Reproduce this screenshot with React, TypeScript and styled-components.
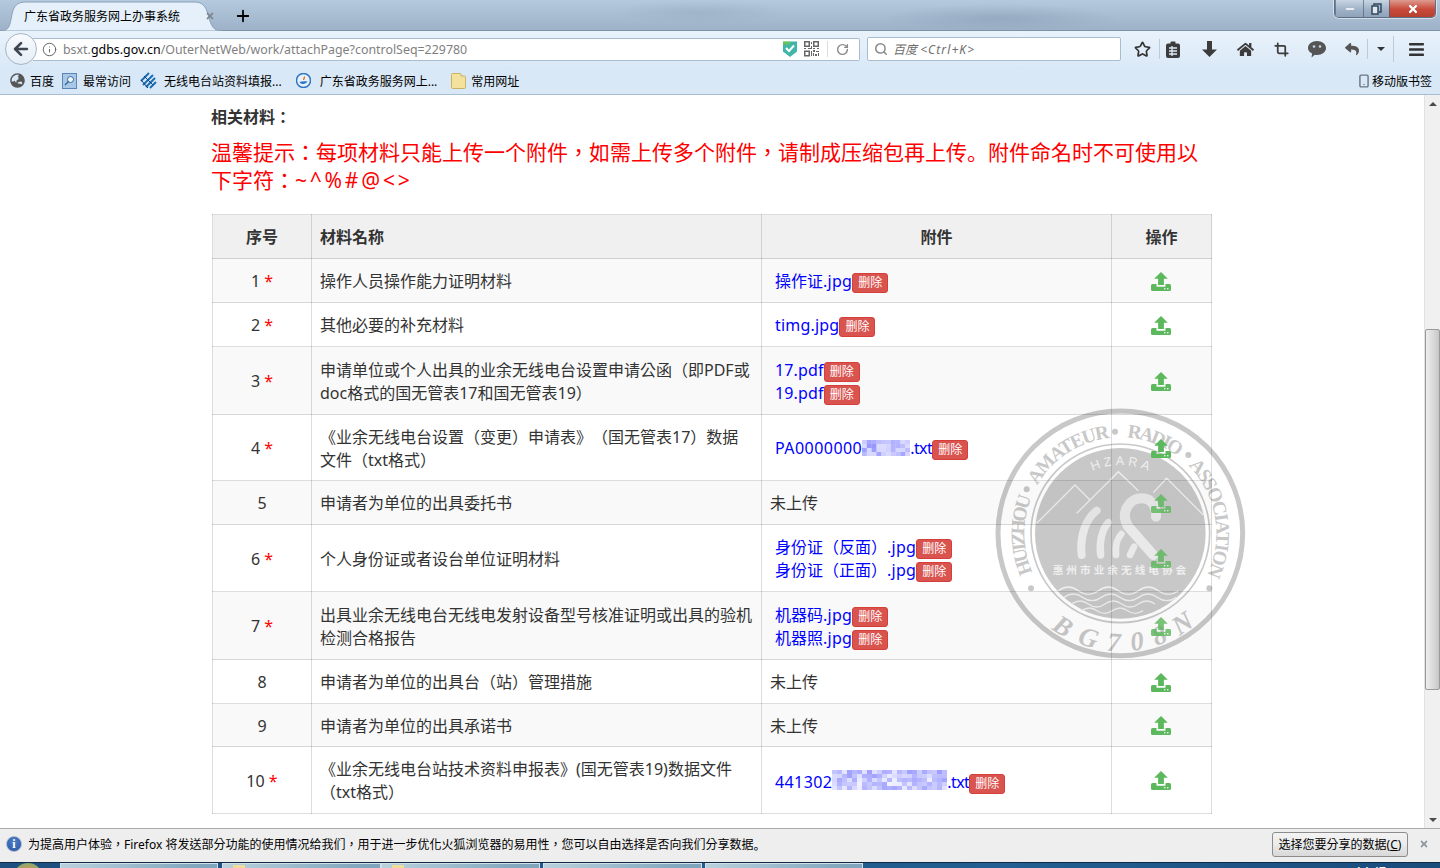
import React from "react";
import styled, { createGlobalStyle } from "styled-components";
import { FaHome, FaReply, FaBars, FaGlobeAsia, FaTimes } from "react-icons/fa";
import { Star, Crop, RotateCw, Search, ArrowLeft, Plus, Info, Smartphone, Minus } from "lucide-react";

const UI = `"Noto Sans", "Noto Sans CJK TC", sans-serif`;

const Global = createGlobalStyle`
  html, body { margin: 0; padding: 0; height: 100%; overflow: hidden; background: #fff; }
  body { font-family: ${UI}; color: #333; text-spacing-trim: space-all; }
  * { box-sizing: border-box; }
`;

const Shell = styled.div`
  width: 1440px; height: 868px; display: flex; flex-direction: column; overflow: hidden;
`;
const TitleBar = styled.div`
  height: 31px; flex: none; display: flex; align-items: flex-start; position: relative;
  background:
    radial-gradient(ellipse 120px 14px at 1000px 18px, rgba(120,140,165,.35), transparent),
    radial-gradient(ellipse 90px 12px at 700px 12px, rgba(120,140,165,.22), transparent),
    linear-gradient(#b5c9de, #9db1c8);
  border-bottom: 1px solid #7f93a8;
`;
const Tab = styled.div`
  position: relative; width: 222px; height: 31px; flex: none;
  display: flex; align-items: center; padding: 0 7px 0 24px; font-size: 12px; color: #000;
`;
const TabShape = styled.svg`
  position: absolute; left: 0; top: 0; width: 222px; height: 31px; z-index: 0;
`;
const TabTitle = styled.span`position: relative; flex: 1; white-space: nowrap;`;
const TabClose = styled.span`position: relative; color: #7f8891; display: flex;`;
const NewTab = styled.span`display: flex; margin: 7px 0 0 12px; color: #000;`;
const WinControls = styled.div`
  margin-left: auto; margin-right: 4px; display: flex; height: 18px; border: 1px solid #5d6f84; border-top: 0;
  border-radius: 0 0 5px 5px; overflow: hidden; box-shadow: 0 0 0 1px rgba(255,255,255,.5);
`;
const WinBtn = styled.div<{ $w: number; $close?: boolean }>`
  width: ${p => p.$w}px; display: flex; align-items: center; justify-content: center; color: #fff;
  border-left: 1px solid rgba(70,90,110,.6);
  background: ${p => p.$close ? "linear-gradient(#dd9a8f, #c9493a 55%, #b5402f)" : "linear-gradient(#c9d6e4, #9fb2c7 55%, #8ea3b9)"};
`;
const Toolbar = styled.div`
  height: 36px; flex: none; display: flex; align-items: center; padding-left: 5px;
  background: linear-gradient(#e8f2fb, #dbe9f7);
`;
const BackBtn = styled.div`
  width: 32px; height: 32px; border-radius: 50%; flex: none; position: relative; z-index: 1;
  display: flex; align-items: center; justify-content: center; color: #3e4650;
  background: linear-gradient(#f8fbfe, #e4edf6); border: 1px solid #a7b6c6;
`;
const UrlBar = styled.div`
  width: 827px; height: 23px; margin-left: -4px; flex: none; display: flex; align-items: center;
  background: #fff; border: 1px solid #a9bdd1; border-left: 0; border-radius: 0 2px 2px 0;
  padding-left: 9px; font-size: 12.4px; color: #7f7f7f; white-space: nowrap;
`;
const UrlInfo = styled.span`display: flex; color: #666; margin-right: 6px;`;
const UrlHost = styled.span`color: #000;`;
const UrlRight = styled.span`margin-left: auto; display: flex; align-items: center; padding-right: 10px;`;
const ShieldWrap = styled.span`display: flex; margin-right: 6px;`;
const UrlDivider = styled.span`width: 1px; height: 16px; background: #dcdcdc; margin: 0 8px;`;
const SearchBox = styled.div`
  width: 254px; height: 24px; margin-left: 7px; flex: none; display: flex; align-items: center; gap: 5px;
  background: #fff; border: 1px solid #a9bdd1; border-radius: 2px; padding-left: 6px;
  font-size: 12px; font-style: italic; color: #6d6d6d;
`;
const Tools = styled.div`display: flex; align-items: center; margin-left: 3px;`;
const ToolBtn = styled.div<{ $w?: number; $ml?: number }>`
  width: ${p => p.$w ?? 36}px; height: 24px; flex: none; display: flex; align-items: center; justify-content: center;
  color: #3c3c3c; margin-left: ${p => p.$ml ?? 0}px;
`;
const ToolSep = styled.span<{ $h?: number }>`
  width: 1px; height: ${p => p.$h ?? 20}px; background: #bccbdb; flex: none; margin-left: -1px;
`;
const Caret = styled.span`
  width: 0; height: 0; border-left: 4px solid transparent; border-right: 4px solid transparent; border-top: 4px solid #333;
`;
const Bookmarks = styled.div`
  height: 28px; flex: none; display: flex; align-items: center; padding: 0 8px 0 10px; font-size: 12px; color: #000;
  background: #d9e8f7; border-bottom: 1px solid #a9bdd1;
`;
const Bookmark = styled.span<{ $gap: number; $after: number }>`
  display: flex; align-items: center; gap: ${p => p.$gap}px; margin-right: ${p => p.$after}px; white-space: nowrap;
`;
const MobileMark = styled.span`margin-left: auto; display: flex; align-items: center; gap: 1px; color: #000; white-space: nowrap;`;
const Body = styled.div`flex: none; height: 733px; display: flex;`;
const Page = styled.div`flex: 1; position: relative; overflow: hidden; background: #fff; padding-right: 2px;`;
const Container = styled.div`
  width: 1000px; margin: 0 auto; padding-top: 11px; position: relative; z-index: 1;
`;
const Section = styled.div`font-size: 16px; font-weight: 700; line-height: 23px; color: #333;`;
const Warning = styled.div`
  font-size: 21px; line-height: 28px; color: #f00; margin: 8px 0 20px;
`;
const Period = styled.span`font-family: "Noto Sans CJK SC", sans-serif;`;
const Table = styled.table`
  width: 999px; margin-left: 1px; table-layout: fixed; border-collapse: collapse; font-size: 16px; line-height: 23px; color: #333;
`;
const Head = styled.th<{ $left?: boolean }>`
  height: 44px; padding: 2px 8px 0; background: rgba(0,0,0,.06); font-weight: 700;
  border: 1px solid rgba(0,0,0,.135); text-align: ${p => p.$left ? "left" : "center"};
`;
const Row = styled.tr<{ $odd: boolean; $h: number }>`
  height: ${p => p.$h}px; background: ${p => p.$odd ? "rgba(0,0,0,.024)" : "transparent"};
`;
const Cell = styled.td<{ $center?: boolean }>`
  padding: 2px 8px 0; border: 1px solid rgba(0,0,0,.135); text-align: ${p => p.$center ? "center" : "left"};
  vertical-align: middle;
`;
const Star_ = styled.span`color: #f00;`;
const FileList = styled.div`padding-left: 5px;`;
const Empty = styled.span`color: #333;`;
const FileLine = styled.div`white-space: nowrap; height: 23px;`;
const FileLink = styled.a`color: #00f; text-decoration: none;`;
const Lat = styled.span<{ $ls: number }>`letter-spacing: ${p => p.$ls}px;`;
const Del = styled.span`
  display: inline-block; height: 20px; line-height: 18px; padding: 0 5px; font-size: 12px; color: #fff;
  background: #d9534f; border: 1px solid #d43f3a; border-radius: 3px; vertical-align: 0;
`;
const UploadSvg = styled.svg<{ $dim?: boolean }>`
  width: 20px; height: 19px; display: block; margin: -1px 0 0 31px; opacity: ${p => p.$dim ? .82 : 1};
`;
const Blur = styled.svg`display: inline-block; vertical-align: -2px;`;
const WatermarkSvg = styled.svg`
  position: absolute; left: 980px; top: 305px; width: 280px; height: 270px; z-index: 0;
`;
const Scrollbar = styled.div`
  width: 16px; flex: none; background: #f0f0f0; border-left: 1px solid #e2e2e2; display: flex; flex-direction: column; align-items: center;
`;
const ArrowUp = styled.span`
  width: 0; height: 0; border-left: 4px solid transparent; border-right: 4px solid transparent;
  border-bottom: 4px solid #4b4b4b; margin-top: 7px;
`;
const ArrowDn = styled.span`
  width: 0; height: 0; border-left: 4px solid transparent; border-right: 4px solid transparent;
  border-top: 4px solid #4b4b4b; margin-top: auto; margin-bottom: 6px;
`;
const Thumb = styled.div`
  width: 15px; height: 361px; margin-top: 223px; background: linear-gradient(90deg, #eee, #d8d8d8 60%, #c6c6c6);
  border: 1px solid #999; border-radius: 2px;
`;
const Notice = styled.div`
  height: 34px; flex: none; display: flex; align-items: center; padding: 0 0 3px 6px; font-size: 12px; color: #000;
  background: #eeeeee; border-top: 1px solid #aaa;
`;
const NoticeIcon = styled.span`
  width: 16px; height: 16px; border-radius: 50%; background: radial-gradient(circle at 50% 35%, #4f7fc8, #2654a3);
  border: 1px solid #a8b6cc; color: #fff; font: bold 12px/14px "Liberation Serif", serif; text-align: center; margin-right: 6px; flex: none;
`;
const NoticeBtn = styled.button`
  margin-left: auto; width: 136px; height: 25px; padding: 0; font: 12px ${UI}; color: #000;
  background: linear-gradient(#f3f3f3, #ebebeb 50%, #d8d8d8); border: 1px solid #8c8c8c; border-radius: 3px;
`;
const NoticeClose = styled.span`display: flex; color: #8f979f; width: 32px; justify-content: center;`;
const Taskbar = styled.div`
  height: 6px; flex: none; display: flex; overflow: hidden;
  background: linear-gradient(90deg, #1d4f80, #235f92 70%, #1a4c7c); border-top: 1px solid #0f2a44;
`;
const Orb = styled.span`
  width: 30px; height: 30px; border-radius: 50%; margin: 0 17px 0 13px; flex: none;
  background: radial-gradient(circle, #e8935c 30%, #8aa96a 70%);
`;
const TaskBtn = styled.span<{ $w: number; $mr?: number }>`
  width: ${p => p.$w}px; flex: none; margin-right: ${p => p.$mr ?? 3}px; padding-left: 10px;
  background: linear-gradient(90deg, #b9d1dd, #7fa6bd 90%); border: 1px solid #d3e0ea; border-bottom: 0;
`;
const Folder = styled.span`
  display: block; margin-top: 1px; width: 12px; height: 6px; background: #f0dd9a;
`;
const Clock = styled.span`
  margin-left: auto; margin-right: 54px; color: #fff; font-size: 12px; line-height: 16px; margin-top: 1px;
`;

function Mosaic({ w, h, seed, strong, cell }: { w: number; h: number; seed: number; strong: boolean; cell: number }) {
  const cells: React.ReactElement[] = [];
  let s = seed;
  for (let y = 0; y < h; y++) {
    for (let x = 0; x < w; x++) {
      s = (s * 137 + 59) % 1009;
      const v = s / 1009;
      const a = strong ? 0.08 + v * 0.5 : 0.22 + v * v * 0.42;
      cells.push(<rect key={`${x}-${y}`} x={x * cell} y={y * 4} width={cell} height={4} fill="#5a5aff" fillOpacity={a} />);
    }
  }
  return <Blur width={w * cell} height={h * 4} viewBox={`0 0 ${w * cell} ${h * 4}`}>{cells}</Blur>;
}

const Jpg = () => <Lat $ls={0.25}>.jpg</Lat>;

const sheet = [
  { n: "1", req: true, h: 44, name: "操作人员操作能力证明材料", files: [<>操作证<Jpg /></>] },
  { n: "2", req: true, h: 44, name: "其他必要的补充材料", files: [<Lat $ls={0.2}>timg.jpg</Lat>] },
  { n: "3", req: true, h: 68, name: "申请单位或个人出具的业余无线电台设置申请公函（即PDF或doc格式的国无管表17和国无管表19）", files: [<Lat $ls={0.15}>17.pdf</Lat>, <Lat $ls={0.15}>19.pdf</Lat>] },
  { n: "4", req: true, h: 66, name: "《业余无线电台设置（变更）申请表》（国无管表17）数据文件（txt格式）", files: [<><Lat $ls={0.45}>PA0000000</Lat><Mosaic w={10} h={4} seed={3} strong={false} cell={4.8} /><Lat $ls={-0.6}>.txt</Lat></>] },
  { n: "5", req: false, h: 44, name: "申请者为单位的出具委托书", files: [] },
  { n: "6", req: true, h: 67, name: "个人身份证或者设台单位证明材料", files: [<>身份证（反面）<Jpg /></>, <>身份证（正面）<Jpg /></>] },
  { n: "7", req: true, h: 68, name: "出具业余无线电台无线电发射设备型号核准证明或出具的验机检测合格报告", files: [<>机器码<Jpg /></>, <>机器照<Jpg /></>] },
  { n: "8", req: false, h: 44, name: "申请者为单位的出具台（站）管理措施", files: [] },
  { n: "9", req: false, h: 43, name: "申请者为单位的出具承诺书", files: [] },
  { n: "10", req: true, h: 67, name: "《业余无线电台站技术资料申报表》(国无管表19)数据文件（txt格式）", files: [<><Lat $ls={0.4}>441302</Lat><Mosaic w={23} h={5} seed={11} strong cell={5} /><Lat $ls={-0.6}>.txt</Lat></>] },
];

function UploadIcon({ dim }: { dim?: boolean }) {
  return (
    <UploadSvg $dim={dim} viewBox="0 0 20 19">
      <path fill="#5cb85c" d="M10 0l6.8 6.8h-3.9V13H7.100V6.800H3.200z" />
      <path fill="#5cb85c" d="M0 13.500Q0 12 1.500 12H5.500V14.700H14.500V12H18.500Q20 12 20 13.500V17.500Q20 19 18.500 19H1.500Q0 19 0 17.500z" />
      <circle cx="13.800" cy="16.800" r=".8" fill="#fff" />
      <circle cx="16.800" cy="16.800" r=".8" fill="#fff" />
    </UploadSvg>
  );
}

const CX = 421, CY = 400;
function arc(r: number, a1: number, a2: number, sweep: 0 | 1) {
  const rad = (a: number) => (a * Math.PI) / 180;
  const p = (a: number) => `${(CX + r * Math.sin(rad(a))).toFixed(1)} ${(CY - r * Math.cos(rad(a))).toFixed(1)}`;
  return `M${p(a1)} A${r} ${r} 0 0 ${sweep} ${p(a2)}`;
}

function Watermark() {
  const G = "#c8c8c8";
  const ring = [
    { id: "r1", t: "HUIZHOU", a: 246, b: 292, len: 232 },
    { id: "r2", t: "AMATEUR", a: 300, b: 354, len: 270 },
    { id: "r3", t: "RADIO", a: 4, b: 37, len: 165 },
    { id: "r4", t: "ASSOCIATION", a: 45, b: 116, len: 356 },
  ];
  return (
    <WatermarkSvg viewBox="0 0 840 810">
      <circle cx={CX} cy={CY} r={367} fill="none" stroke={G} strokeWidth={15} />
      <circle cx={CX} cy={CY} r={268} fill="none" stroke={G} strokeWidth={5} />
      <circle cx={CX} cy={CY} r={256} fill={G} />
      <defs>
        {ring.map(r => <path key={r.id} id={r.id} d={arc(288, r.a, r.b, 1)} />)}
        <path id="rb" d={arc(354, 216, 140, 0)} />
        <path id="rh" d={arc(205, -24, 24, 1)} />
      </defs>
      {ring.map(r => (
        <text key={r.id} fontFamily='"Liberation Serif", serif' fontWeight={700} fontSize={58} fill={G}>
          <textPath href={`#${r.id}`} textLength={r.len} lengthAdjust="spacing">{r.t}</textPath>
        </text>
      ))}
      <text fontFamily='"Liberation Serif", serif' fontStyle="italic" fontWeight={700} fontSize={80} fill={G}>
        <textPath href="#rb" textLength={465} lengthAdjust="spacing">BG708N</textPath>
      </text>
      <text fontFamily='"Liberation Sans", sans-serif' fontSize={38} fill="#eee">
        <textPath href="#rh" textLength={172} lengthAdjust="spacing">HZARA</textPath>
      </text>
      {[[153, 565], [688, 565], [405, 95], [625, 165], [140, 268]].map(([x, y]) => (
        <circle key={x} cx={x} cy={y} r={9} fill={G} />
      ))}
      <g fill="none" stroke="#efefef" strokeWidth={4}>
        <path d="M170 370L285 255L330 300" />
        <path d="M290 340L415 215L475 272" />
        <path d="M520 278L560 235L670 345" />
        <path d="M235 572q30 -22 60 0t60 0t60 0t60 0t60 0t60 0" />
        <path d="M252 592q28 -20 56 0t56 0t56 0t56 0t56 0t56 0" />
        <path d="M275 612q25 -18 50 0t50 0t50 0t50 0t50 0" />
        <path d="M305 632q24 -16 46 0t46 0t46 0t46 0" />
      </g>
      <g fill="none" stroke="#e9e9e9" strokeLinecap="round">
        <path d="M305 465C298 405 320 355 350 332" strokeWidth={24} />
        <path d="M362 465C356 425 368 385 385 368" strokeWidth={22} />
        <path d="M408 465C406 440 412 415 424 402" strokeWidth={20} />
        <path d="M520 465L445 380C420 340 445 295 485 295C515 295 530 320 528 350" strokeWidth={30} />
        <path d="M450 465L462 440" strokeWidth={20} />
      </g>
      <text x={423} y={522} textAnchor="middle" fontFamily='"Noto Sans CJK SC", sans-serif' fontSize={32} fontWeight={700} fill="#eee" letterSpacing={9}>惠州市业余无线电协会</text>
    </WatermarkSvg>
  );
}

const Shield = () => (
  <svg width="16" height="18" viewBox="0 0 16 18">
    <path fill="#3fb6a8" d="M1 1.500h14v10L8 17l-7-5.500z" />
    <path fill="#8ac926" d="M1 1.500h7v3H1z" opacity=".6" />
    <path fill="none" stroke="#fff" strokeWidth="2" d="M4 8l3 3 5-5.500" />
  </svg>
);
const Qr = () => (
  <svg width="15" height="16" viewBox="0 0 15 16" fill="#666">
    <path fillRule="evenodd" d="M0 0h6v6H0zM1.500 1.500v3h3v-3zM9 0h6v6H9zM10.500 1.500v3h3v-3zM0 9.500h6v6H0zM1.500 11v3h3v-3z" />
    <path d="M7 1h1v2H7zM7 5h1v3H7zM0 7h2v1H0zM4 7h3v1H4zM9 7h2v1H9zM13 7h2v1h-2zM9 9h2v2H9zM12 10h3v1h-3zM7 10h1v5H7zM9 12h1v3H9zM11 13h2v2h-2zM14 12h1v3h-1z" />
  </svg>
);
const PageIcon = () => (
  <svg width="15" height="16" viewBox="0 0 15 16">
    <rect x=".5" y=".5" width="14" height="15" fill="#a9c8e8" stroke="#5b86b5" />
    <circle cx="8.500" cy="6.500" r="3" fill="#f2f7fc" stroke="#36689c" />
    <path d="M6.500 8.500L3 12" stroke="#36689c" strokeWidth="1.500" />
  </svg>
);
const StripeIcon = () => (
  <svg width="17" height="17" viewBox="0 0 17 17" fill="none" stroke="#1b6db5" strokeWidth="2">
    <path d="M1 9L9 1M3 13L13 3M6 15L15 6M10 16l6-6" />
    <path d="M1 8l7 8M4 4l9 9" stroke="#0b3f78" strokeWidth="1" />
  </svg>
);
const RoundIcon = () => (
  <svg width="15" height="15" viewBox="0 0 15 15">
    <circle cx="7.500" cy="7.500" r="7" fill="#e8f1fb" stroke="#2e74c4" strokeWidth="1.500" />
    <path d="M3.500 9c2-.5 4.500-1 8-.5C10 11.500 5 12 3.500 9z" fill="#2e74c4" />
    <path d="M7 7c0-2 1-3.500 2-4 0 2 0 3-1 4z" fill="#e0742c" />
  </svg>
);
const FolderIcon = () => (
  <svg width="15" height="16" viewBox="0 0 15 16">
    <path fill="#f4e29c" stroke="#c9b166" d="M.5 1.500Q.5.500 1.500.500H9Q10 .500 10 1.500V3h3.500Q14.500 3 14.500 4v10.500q0 1-1 1h-12q-1 0-1-1z" />
  </svg>
);
const ClipIcon = () => (
  <svg width="14" height="17" viewBox="0 0 14 17">
    <path fill="#3c3c3c" d="M2 2.500h2.500V1.500Q4.500.5 5.500.5h3q1 0 1 1v1H12q2 0 2 2V15q0 2-2 2H2q-2 0-2-2V4.500q0-2 2-2z" />
    <path stroke="#dfeaf6" strokeWidth="1.300" d="M3 7h8M3 10h8M3 13h8M6 5v10" />
  </svg>
);
const DownArrow = () => (
  <svg width="15" height="16" viewBox="0 0 15 16"><path fill="#3c3c3c" d="M5 0h5v8.500h5L7.500 16 0 8.500h5z" /></svg>
);
const Bubble = () => (
  <svg width="18" height="17" viewBox="0 0 18 17">
    <path fill="#555" d="M9 0c5 0 9 3 9 7s-4 7-9 7c-.8 0-1.500-.1-2.200-.2L3.500 16.500l.6-4C1.600 11.300 0 9.300 0 7c0-4 4-7 9-7z" />
    <circle cx="6" cy="5.500" r="1.300" fill="#c9d6e4" />
    <circle cx="12" cy="5.500" r="1.300" fill="#c9d6e4" />
  </svg>
);

export default function App() {
  return (
    <Shell>
      <Global />
      <TitleBar>
        <Tab>
          <TabShape viewBox="0 0 222 31">
            <path d="M0 31C9 31 10 26 12 14C14 5 18 2 26 2H194C202 2 205 5 208 14C211 26 213 31 222 31Z" fill="#e5f0fa" stroke="#8da2b8" />
          </TabShape>
          <TabTitle>广东省政务服务网上办事系统</TabTitle>
          <TabClose><FaTimes size={10} /></TabClose>
        </Tab>
        <NewTab><Plus size={18} strokeWidth={2.4} /></NewTab>
        <WinControls>
          <WinBtn $w={28}><Minus size={12} strokeWidth={3} /></WinBtn>
          <WinBtn $w={26}>
            <svg width="11" height="12" viewBox="0 0 11 12" fill="none" stroke="#33485e" strokeWidth="1.500"><rect x="1" y="3" width="6" height="8" fill="#dfe8f0" /><path d="M3 2.500V1h7v8H8" /></svg>
          </WinBtn>
          <WinBtn $w={46} $close><FaTimes size={12} /></WinBtn>
        </WinControls>
      </TitleBar>
      <Toolbar>
        <BackBtn><ArrowLeft size={20} strokeWidth={3.2} /></BackBtn>
        <UrlBar>
          <UrlInfo><Info size={15} strokeWidth={1.6} /></UrlInfo>
          <span>bsxt.<UrlHost>gdbs.gov.cn</UrlHost>/OuterNetWeb/work/attachPage?controlSeq=229780</span>
          <UrlRight>
            <ShieldWrap><Shield /></ShieldWrap>
            <Qr />
            <UrlDivider />
            <RotateCw size={13} color="#8a8a8a" strokeWidth={2.6} />
          </UrlRight>
        </UrlBar>
        <SearchBox><Search size={14} color="#8a8a8a" strokeWidth={2.6} /><span>百度 <Lat $ls={1.1}>&lt;Ctrl+K&gt;</Lat></span></SearchBox>
        <Tools>
          <ToolBtn><Star size={17} strokeWidth={2.4} color="#333" /></ToolBtn>
          <ToolSep />
          <ToolBtn $w={26}><ClipIcon /></ToolBtn>
          <ToolBtn $ml={5}><DownArrow /></ToolBtn>
          <ToolBtn><FaHome size={17} /></ToolBtn>
          <ToolBtn><Crop size={15} strokeWidth={2.8} /></ToolBtn>
          <ToolBtn><Bubble /></ToolBtn>
          <ToolBtn $w={33}><FaReply size={14} color="#555" /></ToolBtn>
          <ToolSep />
          <ToolBtn $w={26}><Caret /></ToolBtn>
          <ToolSep $h={26} />
          <ToolBtn $ml={4}><FaBars size={17} color="#333" /></ToolBtn>
        </Tools>
      </Toolbar>
      <Bookmarks>
        <Bookmark $gap={5} $after={8}><FaGlobeAsia size={15} color="#555" />百度</Bookmark>
        <Bookmark $gap={6} $after={9}><PageIcon />最常访问</Bookmark>
        <Bookmark $gap={7} $after={14}><StripeIcon />无线电台站资料填报...</Bookmark>
        <Bookmark $gap={9} $after={14}><RoundIcon />广东省政务服务网上...</Bookmark>
        <Bookmark $gap={5} $after={0}><FolderIcon />常用网址</Bookmark>
        <MobileMark><Smartphone size={14} color="#6a7480" strokeWidth={2.4} />移动版书签</MobileMark>
      </Bookmarks>
      <Body>
        <Page>
          <Watermark />
          <Container>
            <Section>相关材料：</Section>
            <Warning>温馨提示：每项材料只能上传一个附件，如需上传多个附件，请制成压缩包再上传<Period>。</Period>附件命名时不可使用以下字符：<Lat $ls={2.8}>~^%#@&lt;&gt;</Lat></Warning>
            <Table>
              <colgroup>
                <col width={99} /><col width={450} /><col width={350} /><col width={100} />
              </colgroup>
              <thead>
                <tr>
                  <Head>序号</Head>
                  <Head $left>材料名称</Head>
                  <Head>附件</Head>
                  <Head>操作</Head>
                </tr>
              </thead>
              <tbody>
                {sheet.map((r, i) => (
                  <Row key={r.n} $odd={i % 2 === 0} $h={r.h}>
                    <Cell $center>{r.n}{r.req && <> <Star_>*</Star_></>}</Cell>
                    <Cell>{r.name}</Cell>
                    <Cell>
                      {r.files.length === 0 ? <Empty>未上传</Empty> : (
                        <FileList>
                          {r.files.map((f, k) => (
                            <FileLine key={k}><FileLink>{f}</FileLink><Del>删除</Del></FileLine>
                          ))}
                        </FileList>
                      )}
                    </Cell>
                    <Cell $center><UploadIcon dim={i >= 4 && i <= 6} /></Cell>
                  </Row>
                ))}
              </tbody>
            </Table>
          </Container>
        </Page>
        <Scrollbar>
          <ArrowUp />
          <Thumb />
          <ArrowDn />
        </Scrollbar>
      </Body>
      <Notice>
        <NoticeIcon>i</NoticeIcon>
        为提高用户体验，Firefox 将发送部分功能的使用情况给我们，用于进一步优化火狐浏览器的易用性，您可以自由选择是否向我们分享数据<Period>。</Period>
        <NoticeBtn>选择您要分享的数据(<u>C</u>)</NoticeBtn>
        <NoticeClose><FaTimes size={10} /></NoticeClose>
      </Notice>
      <Taskbar>
        <Orb />
        <TaskBtn $w={158} $mr={4} />
        <TaskBtn $w={159} $mr={0}><Folder /></TaskBtn>
        <TaskBtn $w={159}><Folder /></TaskBtn>
        <TaskBtn $w={159} />
        <TaskBtn $w={158} />
        <Clock>14:47</Clock>
      </Taskbar>
    </Shell>
  );
}
